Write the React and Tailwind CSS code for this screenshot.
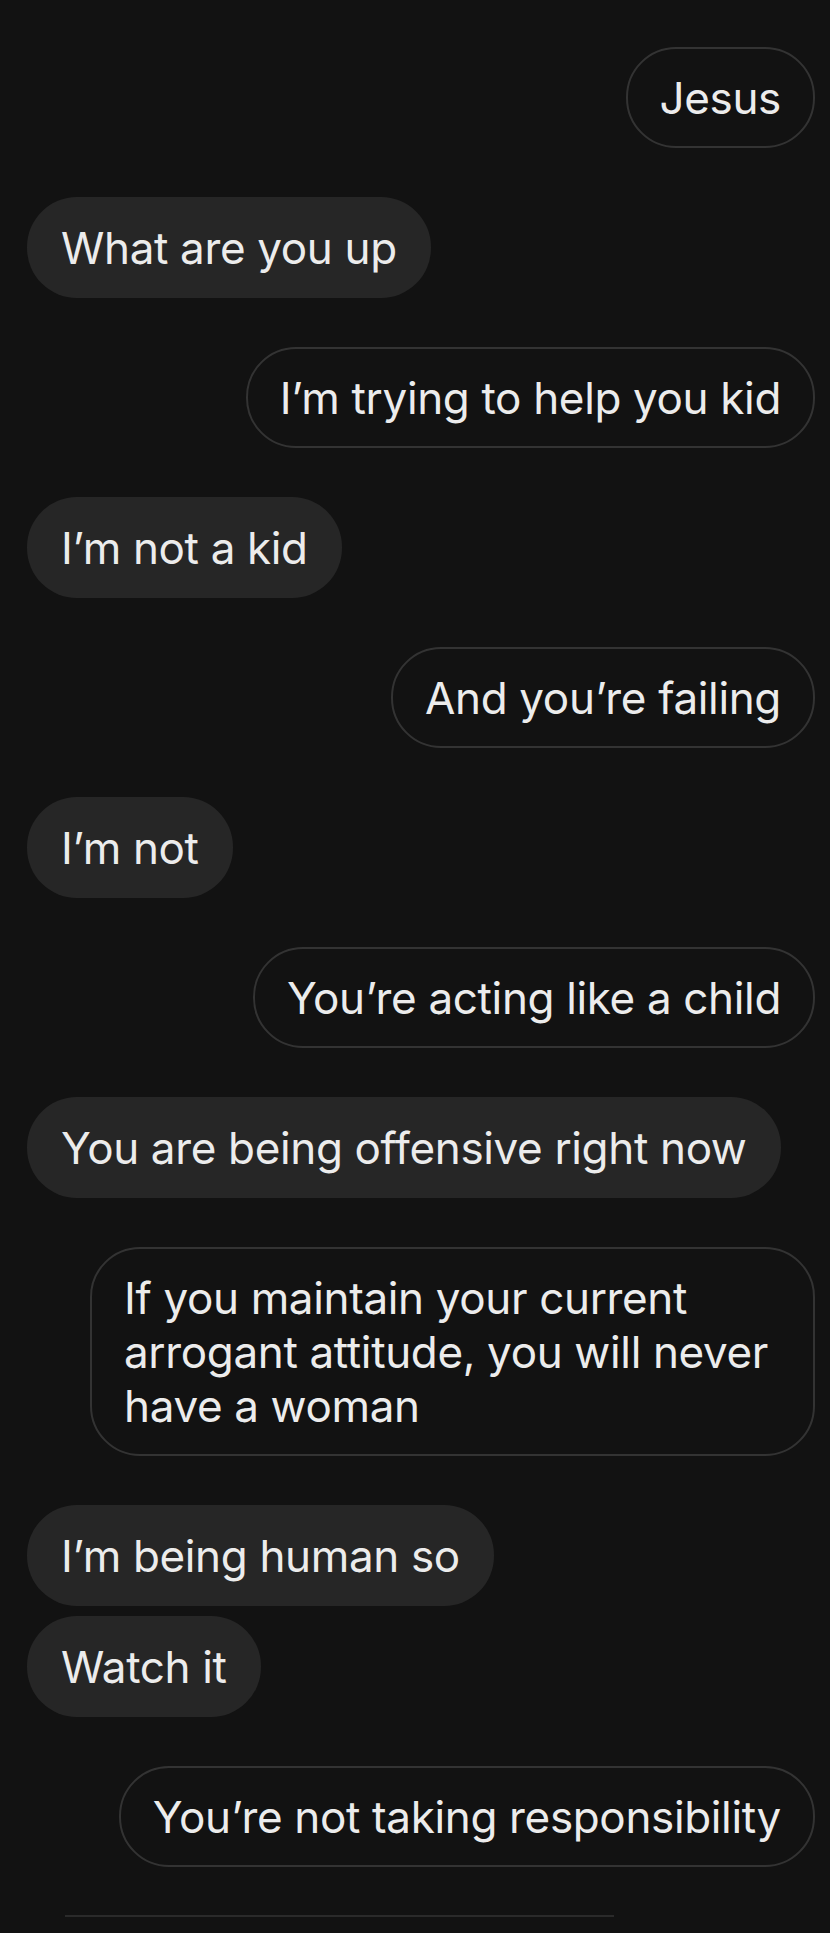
import React from "react";

const messages = [
  { id: 1, mine: true, text: "Jesus" },
  { id: 2, mine: false, text: "What are you up" },
  { id: 3, mine: true, text: "I’m trying to help you kid" },
  { id: 4, mine: false, text: "I’m not a kid" },
  { id: 5, mine: true, text: "And you’re failing" },
  { id: 6, mine: false, text: "I’m not" },
  { id: 7, mine: true, text: "You’re acting like a child" },
  { id: 8, mine: false, text: "You are being offensive right now" },
  {
    id: 9,
    mine: true,
    text: "If you maintain your current arrogant attitude, you will never have a woman",
  },
  { id: 10, mine: false, text: "I’m being human so" },
  { id: 11, mine: false, text: "Watch it", grouped: true },
  { id: 12, mine: true, text: "You’re not taking responsibility" },
];

function Bubble({ msg }) {
  if (msg.mine) {
    return (
      <div className="flex justify-end">
        <div className="max-w-[725px] rounded-[50px] border-2 border-[#333333] px-[32px] py-[21.5px] text-[#ececec]">
          {msg.text}
        </div>
      </div>
    );
  }
  return (
    <div className="flex justify-start">
      <div className="max-w-[770px] rounded-[50px] bg-[#262626] px-[34px] py-[23.5px] text-[#ececec]">
        {msg.text}
      </div>
    </div>
  );
}

export default function App() {
  return (
    <div
      className="min-h-[1933px] w-[830px] bg-[#121212] pt-[47px] pl-[27px] pr-[15px] text-[44px] leading-[54px] tracking-[-0.35px]"
      style={{ fontFamily: "Inter, 'Noto Sans', sans-serif" }}
    >
      <div className="flex flex-col">
        {messages.map((m, i) => (
          <div
            key={m.id}
            className={i === 0 ? "" : m.grouped ? "mt-[10px]" : "mt-[49px]"}
          >
            <Bubble msg={m} />
          </div>
        ))}
      </div>
      <div className="mt-[48px] ml-[38px] h-[2px] w-[549px] bg-[#2a2a2a]" />
    </div>
  );
}
